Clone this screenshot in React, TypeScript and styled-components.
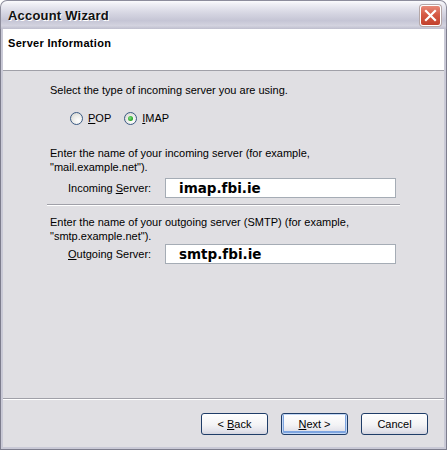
import React from 'react';
import styled, { createGlobalStyle } from 'styled-components';

const GlobalStyle = createGlobalStyle`
  html, body {
    margin: 0;
    padding: 0;
    background: #ffffff;
  }
  body {
    font-family: "Liberation Sans", Arial, sans-serif;
    font-size: 11px;
    color: #000;
  }
`;

const Window = styled.div`
  width: 447px;
  height: 450px;
  display: flex;
  flex-direction: column;
  box-sizing: border-box;
`;

const TitleBar = styled.div`
  height: 29px;
  flex: none;
  box-sizing: border-box;
  display: flex;
  align-items: center;
  justify-content: space-between;
  padding: 0 5px 0 7px;
  border: 1px solid #8d8d9c;
  border-bottom: none;
  border-radius: 7px 7px 0 0;
  background: linear-gradient(
    to bottom,
    #fbfbfd 0%,
    #eeeef4 12%,
    #d8d8e4 40%,
    #c5c5d5 70%,
    #d3d3df 88%,
    #bdbdcd 100%
  );
`;

const TitleText = styled.span`
  font-family: "Liberation Sans", Arial, sans-serif;
  font-weight: bold;
  font-size: 13px;
  color: #111;
  text-shadow: 1px 1px 0 #ffffff;
  letter-spacing: 0.2px;
`;

const CloseButton = styled.div`
  width: 21px;
  height: 21px;
  box-sizing: border-box;
  border: 1px solid #ffffff;
  border-radius: 3px;
  background: linear-gradient(to bottom, #e88a78 0%, #d65a45 45%, #c2402c 100%);
  box-shadow: 0 0 0 1px #b4a7a7;
  display: flex;
  align-items: center;
  justify-content: center;
`;

const Frame = styled.div`
  flex: 1;
  display: flex;
  flex-direction: column;
  box-sizing: border-box;
  border: 1px solid #7d7d8d;
  border-top: none;
  box-shadow: inset 2px 0 #c9c9d6, inset -2px 0 #c9c9d6, inset 0 -2px #c9c9d6;
  padding: 0 2px 2px 2px;
  background: #e0dfe3;
`;

const Header = styled.div`
  height: 42px;
  flex: none;
  box-sizing: border-box;
  background: #ffffff;
  border-bottom: 1px solid #a0a0a8;
  padding: 7px 0 0 5px;
`;

const HeaderTitle = styled.div`
  font-weight: bold;
  font-size: 11px;
  line-height: 14px;
  letter-spacing: 0.3px;
`;

const Content = styled.div`
  flex: 1;
  display: flex;
  flex-direction: column;
  padding: 12px 0 0 47px;
`;

const Text = styled.div<{ $mt?: number }>`
  line-height: 14px;
  margin-top: ${p => p.$mt ?? 0}px;
`;

const RadioRow = styled.div`
  display: flex;
  align-items: center;
  gap: 13px;
  margin: 14px 0 0 20px;
  height: 14px;
`;

const RadioLabel = styled.label`
  display: flex;
  align-items: center;
  gap: 5px;
`;

const RadioCircle = styled.span<{ $checked?: boolean }>`
  width: 13px;
  height: 13px;
  box-sizing: border-box;
  border-radius: 50%;
  border: 1px solid #3a5a84;
  background: radial-gradient(circle at 65% 70%, #ffffff 0%, #ebebe8 50%, #cfcfc8 100%);
  display: flex;
  align-items: center;
  justify-content: center;
  &::after {
    content: '';
    display: ${p => (p.$checked ? 'block' : 'none')};
    width: 5px;
    height: 5px;
    border-radius: 50%;
    background: radial-gradient(circle at 40% 40%, #7fe07f 0%, #21a121 70%);
  }
`;

const FieldRow = styled.div<{ $mt: number }>`
  display: flex;
  align-items: center;
  margin-top: ${p => p.$mt}px;
  padding-left: 18px;
`;

const FieldLabel = styled.label`
  width: 97px;
  flex: none;
`;

const Input = styled.div`
  width: 231px;
  height: 20px;
  box-sizing: border-box;
  background: #ffffff;
  border: 1px solid #a5acb5;
  padding-left: 13px;
  font-family: "DejaVu Sans", Verdana, sans-serif;
  font-weight: bold;
  font-size: 13.5px;
  line-height: 18px;
  color: #000;
`;

const Separator = styled.div<{ $mt: number; $mb: number }>`
  height: 1px;
  background: #a0a0a8;
  border-bottom: 1px solid #ffffff;
  margin: ${p => p.$mt}px 0 ${p => p.$mb}px 0;
`;

const FieldSeparator = styled(Separator)`
  margin-left: -3px;
  width: 353px;
`;

const Footer = styled.div`
  height: 47px;
  flex: none;
  display: flex;
  justify-content: flex-end;
  align-items: flex-start;
  gap: 13px;
  padding: 13px 16px 0 0;
  box-sizing: border-box;
`;

const Button = styled.button<{ $default?: boolean }>`
  width: 67px;
  height: 22px;
  box-sizing: border-box;
  border: 1px solid #1f3d68;
  border-radius: 3px;
  background: linear-gradient(to bottom, #ffffff 0%, #f3f3f5 55%, #e2e2ea 85%, #d4d4de 100%);
  font-family: "Liberation Sans", Arial, sans-serif;
  font-size: 11px;
  color: #000;
  padding: 0;
  box-shadow: ${p => (p.$default ? 'inset 0 0 0 1px #c4d8f5, inset 0 -1px 0 2px #7ea5e0' : 'none')};
`;

export default function App() {
  return (
    <>
      <GlobalStyle />
      <Window>
        <TitleBar>
          <TitleText>Account Wizard</TitleText>
          <CloseButton>
            <svg width="13" height="13" viewBox="0 0 13 13">
              <path d="M2 2 L11 11 M11 2 L2 11" stroke="#ffffff" strokeWidth="2.2" strokeLinecap="square" />
            </svg>
          </CloseButton>
        </TitleBar>
        <Frame>
          <Header>
            <HeaderTitle>Server Information</HeaderTitle>
          </Header>
          <Content>
            <Text>Select the type of incoming server you are using.</Text>
            <RadioRow>
              <RadioLabel>
                <RadioCircle />
                <span><u>P</u>OP</span>
              </RadioLabel>
              <RadioLabel>
                <RadioCircle $checked />
                <span><u>I</u>MAP</span>
              </RadioLabel>
            </RadioRow>
            <Text $mt={21}>
              Enter the name of your incoming server (for example,
              <br />
              "mail.example.net").
            </Text>
            <FieldRow $mt={4}>
              <FieldLabel>Incoming <u>S</u>erver:</FieldLabel>
              <Input>imap.fbi.ie</Input>
            </FieldRow>
            <FieldSeparator $mt={6} $mb={9} />
            <Text>
              Enter the name of your outgoing server (SMTP) (for example,
              <br />
              "smtp.example.net").
            </Text>
            <FieldRow $mt={1}>
              <FieldLabel><u>O</u>utgoing Server:</FieldLabel>
              <Input>smtp.fbi.ie</Input>
            </FieldRow>
          </Content>
          <Separator $mt={0} $mb={0} />
          <Footer>
            <Button>&lt; <u>B</u>ack</Button>
            <Button $default><u>N</u>ext &gt;</Button>
            <Button>Cancel</Button>
          </Footer>
        </Frame>
      </Window>
    </>
  );
}
